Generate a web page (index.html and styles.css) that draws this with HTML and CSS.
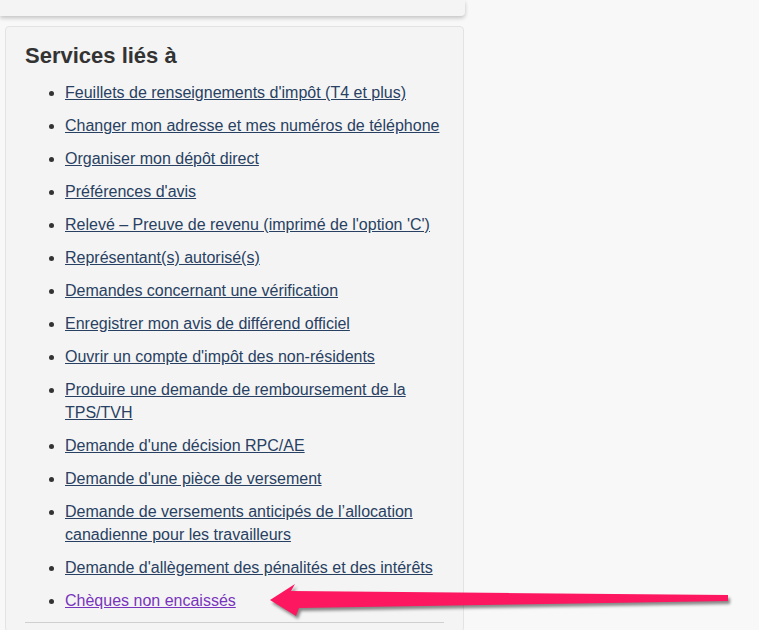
FILE: index.html
```html
<!DOCTYPE html>
<html lang="fr">
<head>
<meta charset="utf-8">
<title>Services liés à</title>
<link rel="stylesheet" href="styles.css">
</head>
<body>
<div class="top-card"></div>
<section class="panel">
  <h2 class="panel-title">Services liés à</h2>
  <ul class="links">
    <li><a href="#">Feuillets de renseignements d'impôt (T4 et plus)</a></li>
    <li><a href="#">Changer mon adresse et mes numéros de téléphone</a></li>
    <li><a href="#">Organiser mon dépôt direct</a></li>
    <li><a href="#">Préférences d'avis</a></li>
    <li><a href="#">Relevé – Preuve de revenu (imprimé de l'option 'C')</a></li>
    <li><a href="#">Représentant(s) autorisé(s)</a></li>
    <li><a href="#">Demandes concernant une vérification</a></li>
    <li><a href="#">Enregistrer mon avis de différend officiel</a></li>
    <li><a href="#">Ouvrir un compte d'impôt des non-résidents</a></li>
    <li><a href="#">Produire une demande de remboursement de la TPS/TVH</a></li>
    <li><a href="#">Demande d'une décision RPC/AE</a></li>
    <li><a href="#">Demande d'une pièce de versement</a></li>
    <li><a href="#">Demande de versements anticipés de l’allocation canadienne pour les travailleurs</a></li>
    <li><a href="#">Demande d'allègement des pénalités et des intérêts</a></li>
    <li><a href="#" class="visited">Chèques non encaissés</a></li>
  </ul>
  <hr class="rule">
</section>
<svg class="arrow" width="759" height="630" viewBox="0 0 759 630" aria-hidden="true">
  <polygon points="270,600 295,584 291,591 728,595 728,601 299,608 296,616" fill="#fd1660"/>
</svg>
</body>
</html>
```
FILE: styles.css
```css
html, body {
  margin: 0;
  padding: 0;
}
body {
  background: #f8f8f8;
  font-family: "Liberation Sans", Arial, sans-serif;
  color: #333;
  width: 759px;
  height: 630px;
  overflow: hidden;
  position: relative;
}
.top-card {
  height: 16px;
  width: 465px;
  background: #f4f4f4;
  border-radius: 0 0 4px 0;
  box-shadow: 0 2px 4px rgba(0, 0, 0, 0.22);
}
.panel {
  box-sizing: border-box;
  margin: 10px 0 0 5px;
  width: 459px;
  background: #f4f4f4;
  border: 1px solid #e3e3e3;
  border-radius: 4px;
  padding: 17px 19px 8px;
}
.panel-title {
  margin: 0;
  font-size: 22px;
  line-height: 24px;
  font-weight: bold;
  color: #333;
}
.links {
  margin: 13px 0 0;
  padding-left: 40px;
  font-size: 16px;
  line-height: 23px;
}
.links li {
  margin-bottom: 10px;
}
.links a {
  color: #284162;
  text-decoration: underline;
}
.links a.visited {
  color: #7834bc;
}
.rule {
  margin: 4px 0 0;
  border: 0;
  border-top: 1px solid #cfcfcf;
  height: 0;
}
.arrow {
  position: absolute;
  left: 0;
  top: 0;
  filter: drop-shadow(2px 3px 1.5px rgba(0, 0, 0, 0.45));
}
```
